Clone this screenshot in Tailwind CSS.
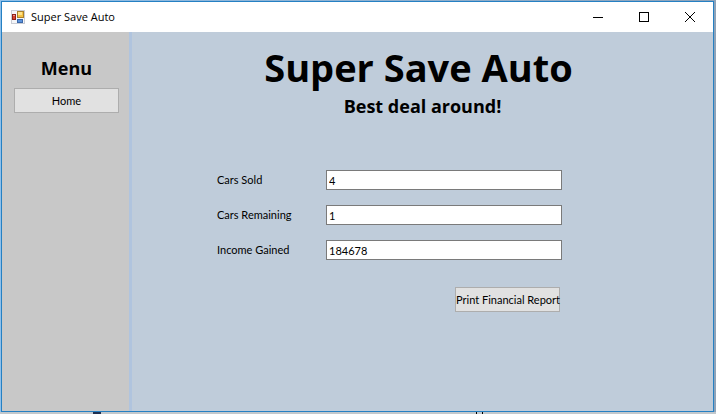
<!DOCTYPE html>
<html lang="en">
<head>
<meta charset="utf-8">
<title>Super Save Auto</title>
<script src="https://cdn.jsdelivr.net/npm/@tailwindcss/browser@4"></script>
</head>
<body class="relative flex h-screen flex-col overflow-hidden bg-linear-to-r from-[#8fc0ea] to-[#8ea3b9] pt-px pr-0.5 pb-0.5 pl-px font-['Lato',sans-serif] text-[11px] leading-4 text-black">
  <div class="flex min-h-0 flex-1 flex-col border border-[#2580c3]">
    <header class="flex h-[30px] shrink-0 items-center bg-white pl-[9px]">
      <svg class="size-[14px]" viewBox="0 0 14 14" aria-hidden="true">
        <rect x=".5" y=".5" width="13" height="13" fill="#f4f5f8" stroke="#c9ccd4"/>
        <rect x="6.5" y="1.5" width="6" height="6" fill="#f5c242" stroke="#a9802c"/>
        <rect x="7" y="2" width="4" height="3" fill="#ffe28a"/>
        <rect x="1.5" y="4.5" width="3" height="5" fill="#d8432f" stroke="#8f2018"/>
        <rect x="2" y="5" width="2" height="1" fill="#f39a8b"/>
        <rect x="6.5" y="9.5" width="5" height="3" fill="#5b92dc" stroke="#3a67a8"/>
      </svg>
      <span class="ml-1.5 flex-1 font-['Open_Sans',sans-serif]">Super Save Auto</span>
      <button class="flex h-full w-[46px] items-center justify-center" aria-label="Minimize">
        <svg class="size-[10px]" viewBox="0 0 10 10" stroke="#000"><path d="M0 5.5H10"/></svg>
      </button>
      <button class="flex h-full w-[46px] items-center justify-center" aria-label="Maximize">
        <svg class="size-[10px]" viewBox="0 0 10 10" fill="none" stroke="#000"><rect x=".5" y=".5" width="9" height="9"/></svg>
      </button>
      <button class="flex h-full w-[46px] items-center justify-center" aria-label="Close">
        <svg class="size-[10px]" viewBox="0 0 10 10" stroke="#000"><path d="M0 0L10 10M10 0L0 10"/></svg>
      </button>
    </header>
    <div class="flex min-h-0 flex-1">
      <nav class="flex w-[127px] shrink-0 flex-col bg-[#c8c8c8] pt-6 pr-[10px] pl-3" aria-label="Menu">
        <h2 class="text-center font-['Comic_Sans_MS','Open_Sans',sans-serif] text-lg leading-6 font-bold">Menu</h2>
        <button class="mt-2 h-[25px] border border-[#adadad] bg-[#e1e1e1] text-center">Home</button>
      </nav>
      <main class="flex flex-1 flex-col items-center border-l-[3px] border-[#b0c4de] bg-[#bfccda]">
        <h1 class="mt-[11px] mr-2 font-['Comic_Sans_MS','Open_Sans',sans-serif] text-[38px] leading-[48px] font-bold">Super Save Auto</h1>
        <p class="mt-[3px] font-['Comic_Sans_MS','Open_Sans',sans-serif] text-lg leading-6 font-bold">Best deal around!</p>
        <form class="mt-[52px] mr-[66px] grid w-[345px] grid-cols-[109px_1fr] items-center gap-y-[15px]">
          <label for="sold">Cars Sold</label>
          <input id="sold" class="h-5 min-w-0 border border-[#7a7a7a] bg-white px-0.5" value="4">
          <label for="remaining">Cars Remaining</label>
          <input id="remaining" class="h-5 min-w-0 border border-[#7a7a7a] bg-white px-0.5" value="1">
          <label for="income">Income Gained</label>
          <input id="income" class="h-5 min-w-0 border border-[#7a7a7a] bg-white px-0.5" value="184678">
          <button type="button" class="col-span-2 mt-3 mr-0.5 h-[25px] w-[105px] justify-self-end border border-[#adadad] bg-[#e1e1e1] whitespace-nowrap">Print Financial Report</button>
        </form>
      </main>
    </div>
  </div>
  <div class="absolute bottom-0 left-0 h-0.5 w-full bg-[#c3c8cc]" aria-hidden="true">
    <span class="absolute left-[93px] h-0.5 w-2 bg-[#1f3050]"></span>
    <span class="absolute left-[476px] h-0.5 w-px bg-black"></span>
    <span class="absolute left-[482px] h-0.5 w-px bg-black"></span>
  </div>
</body>
</html>
